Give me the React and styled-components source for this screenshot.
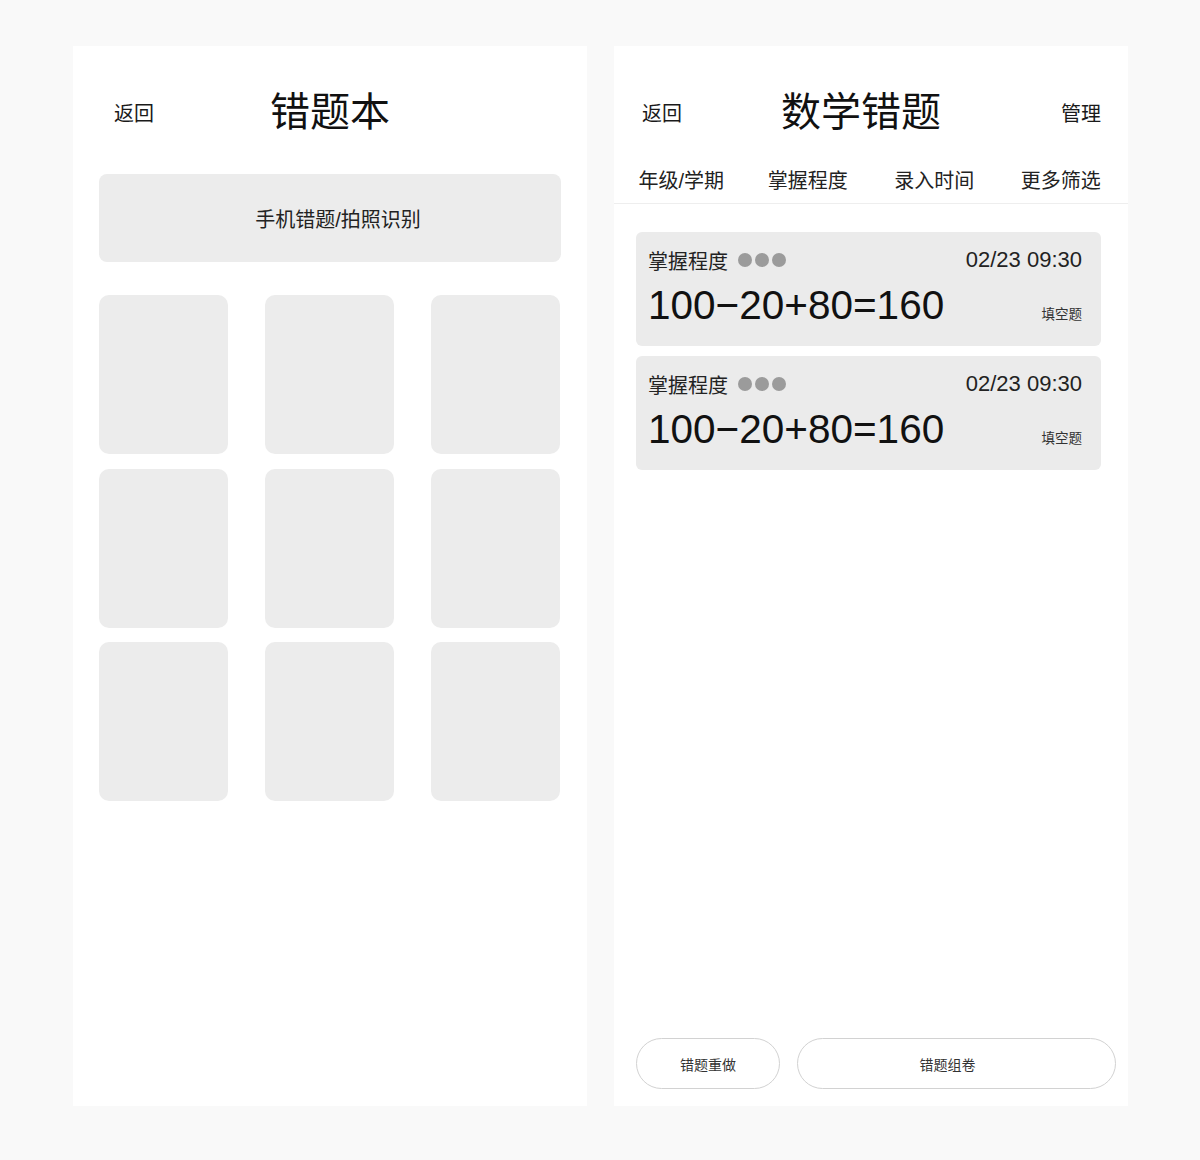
import React from 'react';
import styled, { createGlobalStyle } from 'styled-components';

const GlobalStyle = createGlobalStyle`
  body {
    margin: 0;
    background: #f9f9f9;
    font-family: "Liberation Sans", "Noto Sans CJK SC", sans-serif;
    color: #1a1a1a;
  }
`;

const Page = styled.div`
  display: flex;
  gap: 27px;
  padding: 46px 0 0 73px;
  height: 1160px;
  box-sizing: border-box;
`;

const Panel = styled.div`
  width: 514px;
  height: 1060px;
  background: #fff;
  display: flex;
  flex-direction: column;
  box-sizing: border-box;
`;

const Header = styled.div`
  display: grid;
  grid-template-columns: 1fr auto 1fr;
  align-items: center;
  height: 40px;
  margin-top: 46px;
  padding: ${(p) => p.$pad || '0'};
`;

const Back = styled.span`
  font-size: 20px;
  color: #1a1a1a;
  justify-self: start;
  margin-left: ${(p) => p.$indent || 0}px;
`;

const Manage = styled.span`
  font-size: 20px;
  color: #1a1a1a;
  justify-self: end;
`;

const Title = styled.h1`
  margin: 0 ${(p) => p.$shift || 0}px 0 0;
  font-size: 40px;
  font-weight: 400;
  line-height: 40px;
  color: #111;
`;

const Body = styled.div`
  padding: 0 26px;
`;

const Banner = styled.div`
  margin-top: 42px;
  height: 88px;
  border-radius: 8px;
  background: #ececec;
  display: flex;
  align-items: center;
  justify-content: center;
  padding-left: 16px;
  font-size: 20px;
  color: #222;
`;

const Grid = styled.div`
  margin-top: 33px;
  display: grid;
  grid-template-columns: repeat(3, 129px);
  grid-auto-rows: 159px;
  column-gap: 37px;
  row-gap: 14.5px;
`;

const Tile = styled.div`
  background: #ececec;
  border-radius: 10px;
`;

const Tabs = styled.div`
  margin-top: 24px;
  height: 47px;
  display: grid;
  grid-template-columns: repeat(4, 1fr);
  align-items: center;
  padding: 0 4px;
  border-bottom: 1px solid #eeeeee;
`;

const Tab = styled.span`
  text-align: center;
  font-size: 20px;
  color: #222;
`;

const List = styled.div`
  flex: 1;
  display: flex;
  flex-direction: column;
  gap: 10px;
  padding: 28px 27px 0 22px;
`;

const Card = styled.div`
  height: 114px;
  box-sizing: border-box;
  background: #ebebeb;
  border-radius: 6px;
  padding: 14px 19px 17px 12px;
`;

const CardTop = styled.div`
  display: flex;
  align-items: center;
  justify-content: space-between;
  height: 28px;
`;

const Level = styled.div`
  display: flex;
  align-items: center;
  font-size: 20px;
  color: #222;
`;

const Dots = styled.div`
  display: flex;
  gap: 3px;
  margin-left: 10px;
`;

const Dot = styled.span`
  width: 14px;
  height: 14px;
  border-radius: 50%;
  background: #9b9b9b;
`;

const Time = styled.span`
  font-size: 22px;
  color: #222;
`;

const CardBottom = styled.div`
  display: flex;
  align-items: baseline;
  justify-content: space-between;
  margin-top: 7px;
`;

const Formula = styled.span`
  font-size: 40.5px;
  line-height: 48px;
  color: #111;
`;

const Kind = styled.span`
  font-size: 13.5px;
  color: #333;
`;

const Actions = styled.div`
  display: flex;
  gap: 17px;
  padding: 0 12px 17px 22px;
`;

const Button = styled.button`
  height: 51px;
  width: ${(p) => (p.$wide ? 'auto' : '144px')};
  flex: ${(p) => (p.$wide ? 1 : 'none')};
  padding: ${(p) => (p.$wide ? '0 18px 0 0' : '0')};
  border: 1px solid #d2d2d2;
  border-radius: 26px;
  background: #fff;
  font-family: inherit;
  font-size: 14px;
  color: #333;
`;

const questions = [
  { level: 3, time: '02/23 09:30', text: '100−20+80=160', kind: '填空题' },
  { level: 3, time: '02/23 09:30', text: '100−20+80=160', kind: '填空题' },
];

const tabs = ['年级/学期', '掌握程度', '录入时间', '更多筛选'];

export default function App() {
  return (
    <>
      <GlobalStyle />
      <Page>
        <Panel>
          <Body>
            <Header>
              <Back $indent={15}>返回</Back>
              <Title>错题本</Title>
              <span />
            </Header>
            <Banner>手机错题/拍照识别</Banner>
            <Grid>
              {Array.from({ length: 9 }).map((_, i) => (
                <Tile key={i} />
              ))}
            </Grid>
          </Body>
        </Panel>

        <Panel>
          <Header $pad="0 27px 0 28px">
            <Back>返回</Back>
            <Title $shift={21}>数学错题</Title>
            <Manage>管理</Manage>
          </Header>
          <Tabs>
            {tabs.map((t) => (
              <Tab key={t}>{t}</Tab>
            ))}
          </Tabs>
          <List>
            {questions.map((q, i) => (
              <Card key={i}>
                <CardTop>
                  <Level>
                    掌握程度
                    <Dots>
                      {Array.from({ length: q.level }).map((_, j) => (
                        <Dot key={j} />
                      ))}
                    </Dots>
                  </Level>
                  <Time>{q.time}</Time>
                </CardTop>
                <CardBottom>
                  <Formula>{q.text}</Formula>
                  <Kind>{q.kind}</Kind>
                </CardBottom>
              </Card>
            ))}
          </List>
          <Actions>
            <Button>错题重做</Button>
            <Button $wide>错题组卷</Button>
          </Actions>
        </Panel>
      </Page>
    </>
  );
}
